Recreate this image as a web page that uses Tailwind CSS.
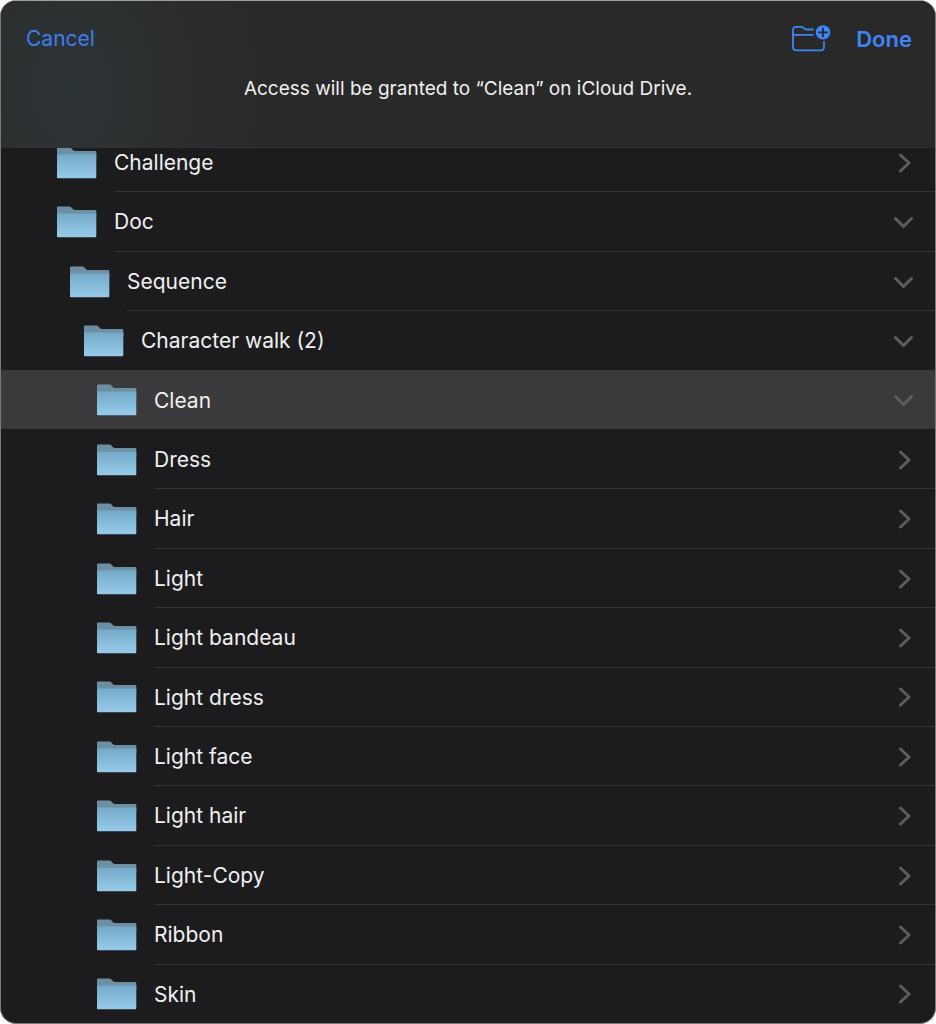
<!DOCTYPE html>
<html lang="en">
<head>
  <meta charset="UTF-8">
  <meta name="viewport" content="width=device-width, initial-scale=1.0">
  <title>Choose a folder</title>
  <script src="https://cdn.jsdelivr.net/npm/@tailwindcss/browser@4"></script>
</head>
<body class="bg-white font-['Inter','Liberation_Sans',sans-serif] text-[21px] text-[#f0f0f0]">
  <div class="flex min-h-screen flex-col overflow-hidden rounded-2xl border border-[#77797a] border-t-[#9a9f9c] bg-[#1c1c1e]">

    <!-- Header -->
    <header class="relative z-10 h-[147px] shrink-0 border-b border-[#303032] bg-[#292929] bg-[radial-gradient(ellipse_190px_260px_at_72px_90px,#2d3438,#2d3031_35%,#292929)]">
      <div class="flex h-[76px] items-center pr-[23px] pl-[25px]">
        <button id="cancelBtn" class="text-[#3b7fee]">Cancel</button>
        <button id="newFolderBtn" aria-label="New folder" class="mr-[25px] ml-auto">
          <svg class="h-[28px] w-[40px]" viewBox="0 0 40 28" fill="none" stroke="#3d86f7" stroke-width="1.8" stroke-linecap="round" stroke-linejoin="round">
            <path d="M22 4.500h-6.700c-.9 0-1.400-.2-2-.8l-1.400-1.200c-.6-.5-1.100-.7-2-.7H5.400C3.200 1.800 2 3 2 5.200v16.800c0 2.200 1.200 3.400 3.400 3.400h24.200c2.200 0 3.400-1.200 3.400-3.400V17M2 9.800h20" />
            <circle cx="32" cy="7.400" r="7.200" fill="#3d86f7" stroke="none" />
            <path d="M32 3.400v8M28 7.400h8" stroke="#292929" stroke-width="1.800" />
          </svg>
        </button>
        <button id="doneBtn" class="text-[22px] font-semibold text-[#3d86f7]">Done</button>
      </div>
      <p class="text-center text-[19px] leading-6">Access will be granted to “Clean” on iCloud Drive.</p>
    </header>

    <!-- Folder list, scrolled a little way under the header -->
    <ul id="folderList" class="-mt-4 flex flex-1 flex-col"></ul>
  </div>

  <!-- Shared gradient -->
  <svg class="absolute h-0 w-0" aria-hidden="true">
    <defs>
      <linearGradient id="folderFill" x1="0" y1="0" x2="0" y2="1">
        <stop offset="0" stop-color="#74a9c8" />
        <stop offset="1" stop-color="#98cbea" />
      </linearGradient>
    </defs>
  </svg>

  <script>
    const folders = [
      { name: "Challenge", level: 0 },
      { name: "Doc", level: 0, open: true },
      { name: "Sequence", level: 1, open: true },
      { name: "Character walk (2)", level: 2, open: true },
      { name: "Clean", level: 3, open: true, selected: true },
      { name: "Dress", level: 3 },
      { name: "Hair", level: 3 },
      { name: "Light", level: 3 },
      { name: "Light bandeau", level: 3 },
      { name: "Light dress", level: 3 },
      { name: "Light face", level: 3 },
      { name: "Light hair", level: 3 },
      { name: "Light-Copy", level: 3 },
      { name: "Ribbon", level: 3 },
      { name: "Skin", level: 3, last: true }
    ];

    const indents = ["pl-[56px]", "pl-[69px]", "pl-[83px]", "pl-[96px]"];

    const folderIcon = `
      <svg class="mt-[2px] h-[32px] w-[40px] shrink-0" viewBox="0 0 40 32">
        <path d="M0 1.500Q0 .500 1 .500H12.500Q13.500 .500 14.200 1.300L16 3.200Q16.600 4 17.800 4H38.300Q39.300 4 39.300 5V12H0Z" fill="#6c8fa3" />
        <path d="M0 7.400H39.300V30.300Q39.300 31.300 38.300 31.300H1Q0 31.300 0 30.300Z" fill="url(#folderFill)" />
      </svg>`;

    const chevronRight = `
      <svg class="h-[20px] w-[20px]" viewBox="0 0 20 20" fill="none" stroke="#5d5d60" stroke-width="3" stroke-linecap="round" stroke-linejoin="round">
        <path d="M6.500 2l8.500 8-8.500 8" />
      </svg>`;

    const chevronDown = `
      <svg class="h-[20px] w-[20px]" viewBox="0 0 20 20" fill="none" stroke="#5d5d60" stroke-width="3" stroke-linecap="round" stroke-linejoin="round">
        <path d="M1.500 6.500l8 8 8-8" />
      </svg>`;

    // draw the rows
    const folderList = document.getElementById("folderList");

    function showFolders() {
      folderList.innerHTML = folders.map((f, i) => {
        const next = folders[i + 1];
        const noLine = f.selected || f.last || (next && next.selected);
        return `
        <li class="flex min-h-[56px] flex-1 ${f.selected ? "bg-[#3a3a3c]" : ""}">
          <button data-index="${i}" class="flex flex-1 items-center text-left ${indents[f.level]}">
            ${folderIcon}
            <span class="-mb-px ml-[17px] flex flex-1 items-center justify-between self-stretch border-b pt-[2px] pr-[21px] ${noLine ? "border-transparent" : "border-[#343436]"}">
              <span>${f.name}</span>
              ${f.open ? chevronDown : chevronRight}
            </span>
          </button>
        </li>`;
      }).join("");
    }

    showFolders();

    // select a folder on click
    folderList.addEventListener("click", (e) => {
      const btn = e.target.closest("button");
      if (!btn) return;
      folders.forEach((f, i) => f.selected = i === Number(btn.dataset.index));
      showFolders();
    });
  </script>
</body>
</html>
